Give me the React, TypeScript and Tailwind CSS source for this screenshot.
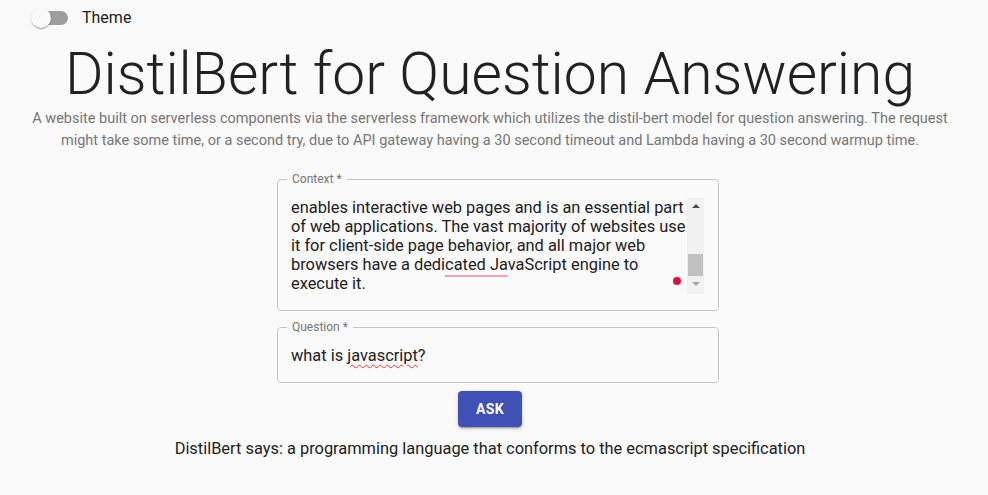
import React from "react";

export default function App() {
  return (
    <div
      className="min-h-[495px] w-[988px] bg-[#fafafa] text-[#212121]"
      style={{ fontFamily: "Roboto, 'Noto Sans', sans-serif" }}
    >
      <div className="w-[980px]">
        {/* Theme toggle */}
        <div className="flex h-[38px] items-center pl-[22px]">
          <div className="relative h-[38px] w-[58px]">
            <div className="absolute left-[12px] top-[11px] h-[14px] w-[34px] rounded-full bg-[#9e9e9e]" />
            <div className="absolute left-[9px] top-[8px] h-[20px] w-[20px] rounded-full bg-[#fafafa] shadow-[0_2px_1px_-1px_rgba(0,0,0,0.2),0_1px_1px_0_rgba(0,0,0,0.14),0_1px_3px_0_rgba(0,0,0,0.12)]" />
          </div>
          <span className="ml-[2px] -mt-[3px] text-[16px] leading-[24px] text-[#212121]">Theme</span>
        </div>

        {/* Title */}
        <h1 className="text-center text-[58.8px] font-light leading-[72px] text-[#212121]">
          DistilBert for Question Answering
        </h1>

        {/* Description */}
        <p className="mx-auto mt-[-2px] w-[960px] text-center text-[14.5px] leading-[22px] text-[#757575]">
          A website built on serverless components via the serverless framework which utilizes the distil-bert model for question answering. The request
          <br />
          might take some time, or a second try, due to API gateway having a 30 second timeout and Lambda having a 30 second warmup time.
        </p>

        {/* Context field */}
        <div className="relative ml-[277px] mt-[27px] h-[132px] w-[442px] rounded-[4px] border border-[#c4c4c4]">
          <span className="absolute left-[9px] top-[-9px] bg-[#fafafa] px-[5px] text-[12px] leading-[16px] text-[#757575]">
            Context *
          </span>
          <div className="flex pl-[13px] pr-[13px] pt-[17.5px]">
            <div className="w-[396px] text-[16.4px] leading-[19px] text-[#212121]">
              <div className="whitespace-nowrap">enables interactive web pages and is an essential part</div>
              <div className="whitespace-nowrap">of web applications. The vast majority of websites use</div>
              <div className="whitespace-nowrap">it for client-side page behavior, and all major web</div>
              <div className="whitespace-nowrap">
                browsers have a dedi
                <span className="border-b-[2px] border-[#f7a1b3] pb-[1px]">cated Ja</span>
                vaScript engine to
              </div>
              <div className="flex items-center justify-between whitespace-nowrap">
                <span>execute it.</span>
                <span className="mr-[6px] mt-[-4px] h-[8px] w-[8px] rounded-full bg-[#e0103a]" />
              </div>
            </div>
            {/* scrollbar */}
            <div className="flex h-[96px] w-[17px] flex-col items-center bg-[#f1f1f1]">
              <div className="flex h-[17px] w-full items-center justify-center">
                <div className="h-0 w-0 border-x-[4px] border-b-[4px] border-x-transparent border-b-[#505050]" />
              </div>
              <div className="mt-[39px] h-[22px] w-[15px] bg-[#c1c1c1]" />
              <div className="flex h-[17px] w-full items-center justify-center">
                <div className="h-0 w-0 border-x-[4px] border-t-[4px] border-x-transparent border-t-[#a3a3a3]" />
              </div>
            </div>
          </div>
        </div>

        {/* Question field */}
        <div className="relative ml-[277px] mt-[16px] h-[56px] w-[442px] rounded-[4px] border border-[#c4c4c4]">
          <span className="absolute left-[9px] top-[-9px] bg-[#fafafa] px-[5px] text-[12px] leading-[16px] text-[#757575]">
            Question *
          </span>
          <div className="pl-[13px] pt-[17.5px] text-[16.4px] leading-[19px] text-[#212121]">
            what is{" "}
            <span className="underline decoration-[#e53935] decoration-wavy decoration-[1px] underline-offset-[3px]">
              javascript
            </span>
            ?
          </div>
        </div>

        {/* Button */}
        <div className="mt-[8px] flex justify-center">
          <button className="h-[36px] w-[64px] rounded-[4px] bg-[#3f51b5] text-[14px] font-bold uppercase tracking-[0.4px] text-white shadow-[0_3px_1px_-2px_rgba(0,0,0,0.2),0_2px_2px_0_rgba(0,0,0,0.14),0_1px_5px_0_rgba(0,0,0,0.12)]">
            Ask
          </button>
        </div>

        {/* Answer */}
        <p className="mt-[10px] text-center text-[16.4px] leading-[24px] text-[#212121]">
          DistilBert says: a programming language that conforms to the ecmascript specification
        </p>
      </div>
    </div>
  );
}
